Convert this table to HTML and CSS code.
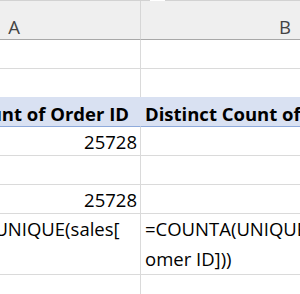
FILE: index.html
```html
<!DOCTYPE html>
<html>
<head>
<meta charset="utf-8">
<link rel="stylesheet" href="styles.css">
</head>
<body>
<div class="sheet">
  <div class="row head">
    <div class="cell a">A</div>
    <div class="cell b">B</div>
  </div>
  <div class="row">
    <div class="cell a"></div>
    <div class="cell b"></div>
  </div>
  <div class="row plain">
    <div class="cell a"></div>
    <div class="cell b"></div>
  </div>
  <div class="row band">
    <div class="cell a num-right">Count of Order ID</div>
    <div class="cell b">Distinct Count of Customer ID</div>
  </div>
  <div class="row">
    <div class="cell a num">25728</div>
    <div class="cell b"></div>
  </div>
  <div class="row">
    <div class="cell a"></div>
    <div class="cell b"></div>
  </div>
  <div class="row">
    <div class="cell a num">25728</div>
    <div class="cell b"></div>
  </div>
  <div class="row wrap">
    <div class="cell a"><span class="line">=COUNTA(UNIQUE(sales[</span><span class="line">Order ID]))</span></div>
    <div class="cell b"><span class="line">=COUNTA(UNIQUE(sales[Cust</span><span class="line">omer ID]))</span></div>
  </div>
  <div class="row last">
    <div class="cell a"></div>
    <div class="cell b"></div>
  </div>
</div>
</body>
</html>
```
FILE: styles.css
```css
html, body {
  margin: 0;
  padding: 0;
  background: #ffffff;
  overflow: hidden;
}

body {
  font-family: "Open Sans", "Noto Sans", sans-serif;
  font-size: 18.5px;
  color: #000000;
}

.sheet {
  width: 541px;
  margin-left: -112px;
}

.row {
  display: grid;
  grid-template-columns: 253px 288px;
  height: 29px;
}

.cell {
  box-sizing: border-box;
  display: flex;
  align-items: flex-end;
  padding: 0 4px 2px 4px;
  line-height: 22px;
  white-space: nowrap;
  overflow: hidden;
  border-bottom: 1px solid #dadada;
}

.cell.a {
  border-right: 1px solid #dadada;
}

/* column header row */
.head {
  height: 40px;
  background: #efefef;
  border-image: linear-gradient(to right, #d2d2d2 262px, #ffffff 262px, #ffffff 277px, #d2d2d2 277px) 1 0 0 0;
  border-style: solid;
  border-width: 1px 0 0 0;
  box-sizing: border-box;
}

.head .cell {
  justify-content: center;
  color: #444444;
  padding-bottom: 1px;
  border-bottom: 1px solid #a8a8a8;
}

.head .cell.a {
  border-right-color: #d6d6d6;
}

.plain {
  height: 28px;
}

.plain .cell {
  border-bottom: none;
}

/* pivot header band */
.band {
  height: 30px;
  font-weight: 700;
}

.band .cell {
  background: #d9e1f2;
  border-bottom: 1px solid #8eaadb;
  padding-bottom: 1px;
}

.band .cell.a {
  border-right-color: #d9e1f2;
}

.num {
  justify-content: flex-end;
  padding-right: 3px;
}

.num-right {
  justify-content: flex-end;
  padding-right: 11px;
}

/* wrapped formula row */
.wrap {
  height: 59px;
}

.wrap .cell {
  flex-direction: column;
  align-items: flex-start;
  justify-content: flex-start;
  line-height: 30px;
  overflow: visible;
  padding-top: 0;
  padding-bottom: 0;
}

.wrap .cell.a {
  overflow: hidden;
  padding-left: 15px;
}

.line {
  display: block;
}

.last {
  height: 40px;
}
```
